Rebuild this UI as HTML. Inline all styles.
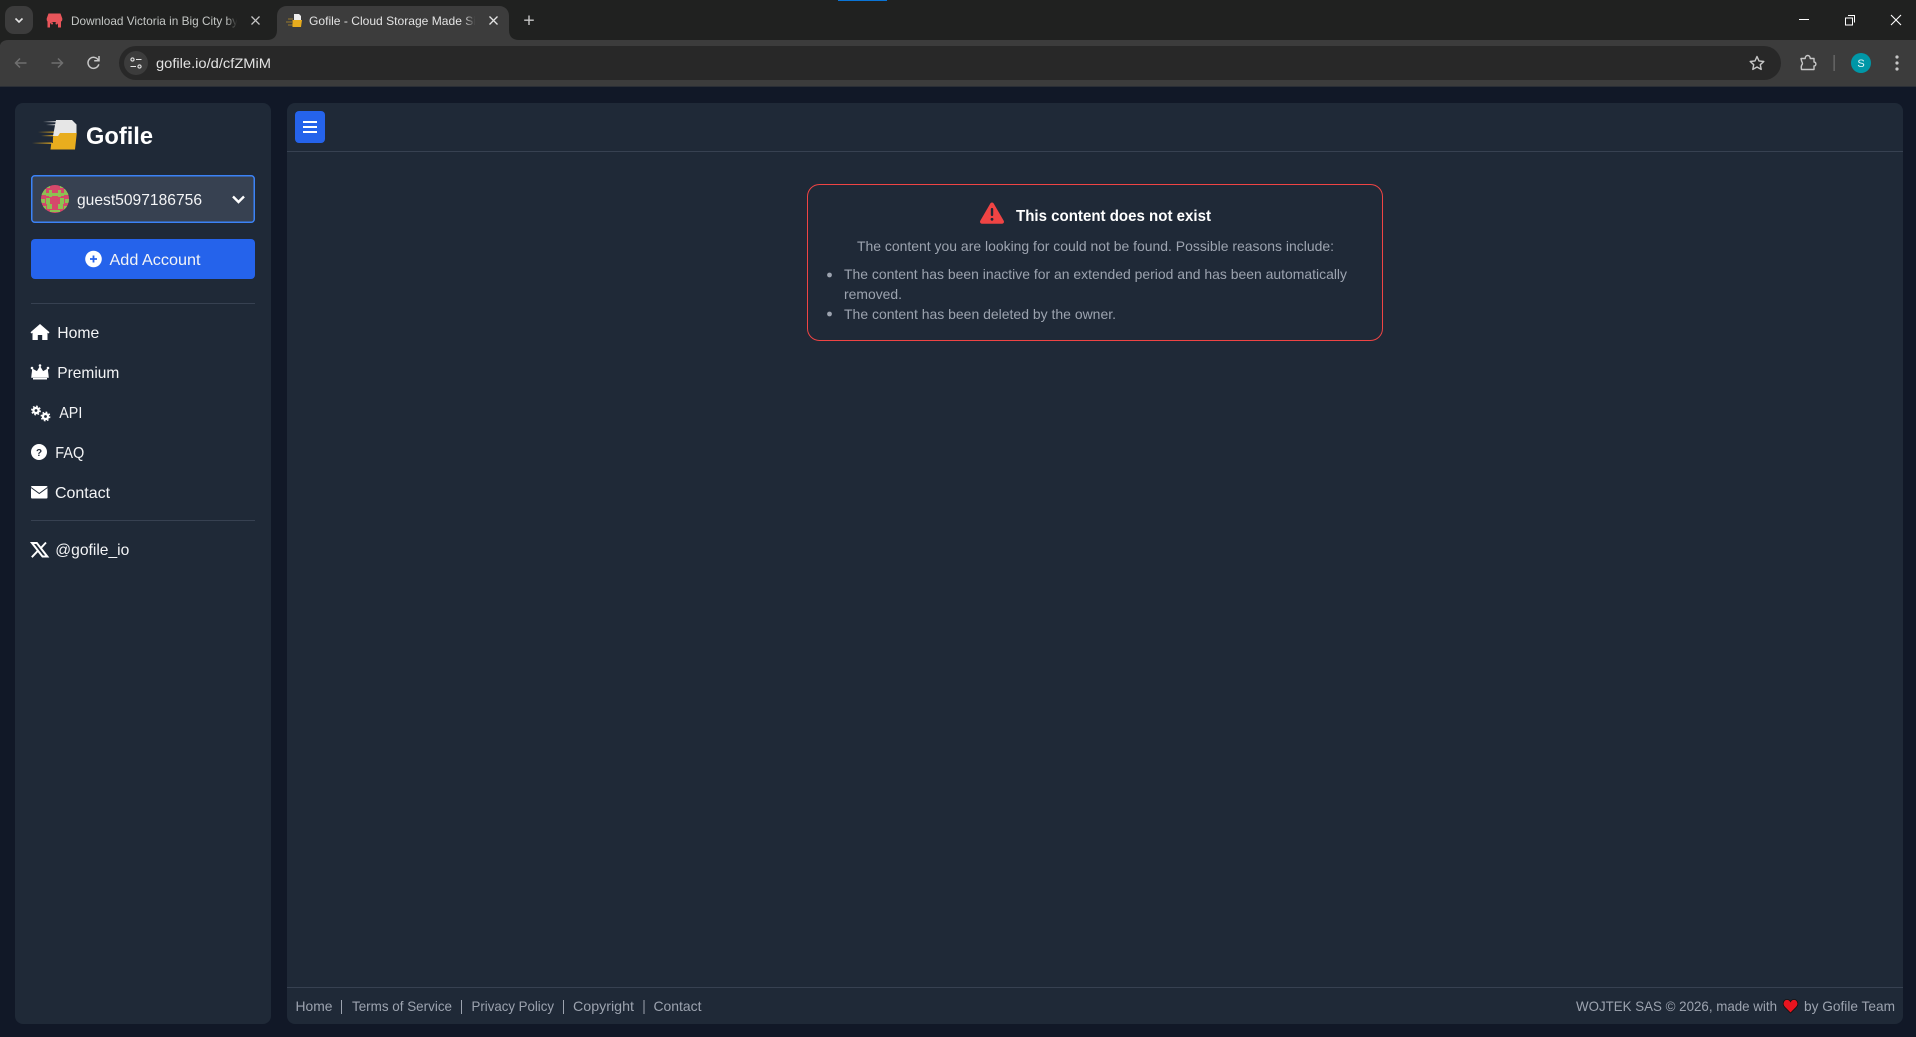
<!DOCTYPE html>
<html lang="en">
<head>
<meta charset="utf-8">
<title>Gofile</title>
<style>
html,body{margin:0;padding:0;width:1916px;height:1037px;overflow:hidden;background:#111827}
svg{position:absolute;left:0;top:0;display:block}
text{font-family:"Liberation Sans",Arial,sans-serif}
.nav{font-size:16px;fill:#f3f4f6}
.foot{font-size:14px;fill:#9ca3af}
.alert{font-size:14px;fill:#9ca3af}
</style>
</head>
<body>
<svg width="1916" height="1037" viewBox="0 0 1916 1037" xmlns="http://www.w3.org/2000/svg">
<defs>
<linearGradient id="f1" x1="0" x2="1"><stop offset="0" stop-color="#202120" stop-opacity="0"/><stop offset=".7" stop-color="#202120"/><stop offset="1" stop-color="#202120"/></linearGradient>
<linearGradient id="f2" x1="0" x2="1"><stop offset="0" stop-color="#3c3c3c" stop-opacity="0"/><stop offset=".8" stop-color="#3c3c3c"/><stop offset="1" stop-color="#3c3c3c"/></linearGradient>
<linearGradient id="s1" x1="0" x2="1"><stop offset="0" stop-color="#e8ad1e" stop-opacity="0"/><stop offset="1" stop-color="#e8ad1e"/></linearGradient>
<linearGradient id="s2" x1="0" x2="1"><stop offset="0" stop-color="#e8e8e8" stop-opacity="0"/><stop offset="1" stop-color="#e8e8e8"/></linearGradient>
</defs>

<!-- browser chrome -->
<rect x="0" y="0" width="1916" height="40" fill="#202120"/>
<rect x="838" y="0" width="49" height="1" fill="#0a74d6"/>
<rect x="5" y="6" width="28" height="28" rx="9" fill="#3c3c3c"/>
<path d="M15.500 18.500l3.500 3.500 3.500-3.500" fill="none" stroke="#e3e3e3" stroke-width="1.600"/>

<path d="M48.500 13.500h12l1.800 5v1.500a2.200 2.200 0 0 1-2.500 1.800H49a2.200 2.200 0 0 1-2.300-1.800v-1.500z" fill="#e8555a"/>
<path d="M47.500 21h13.500v6.500H47.500z" fill="#e8555a"/>
<path d="M50 27.500v-3a4 2.500 0 0 1 8 0v3z" fill="#202120"/>
<circle cx="52" cy="23.500" r="1" fill="#e8555a"/><circle cx="56.500" cy="23.500" r="1" fill="#e8555a"/>
<text x="71" y="25" font-size="12" fill="#c4c7c5" textLength="167" lengthAdjust="spacingAndGlyphs">Download Victoria in Big City by</text>
<rect x="226" y="12" width="16" height="18" fill="url(#f1)"/>
<path d="M251.500 16.500l8 8M259.500 16.500l-8 8" stroke="#c7c7c7" stroke-width="1.300"/>

<path d="M267 40c6 0 10-3 10-10V16c0-6 4-10 10-10h212c6 0 10 4 10 10v14c0 7 4 10 10 10z" fill="#3c3c3c"/>
<path d="M288 19h5M286 22h6M288 25h5" stroke="#e8ad1e" stroke-width="1" opacity=".55"/>
<path d="M294 14h5l2 2v5h-7z" fill="#eeeeee"/>
<path d="M292.500 20h9.500l-1 7h-8.500z" fill="#e8ad1e"/>
<text x="309" y="25" font-size="12" fill="#e3e3e3" textLength="167" lengthAdjust="spacingAndGlyphs">Gofile - Cloud Storage Made Si</text>
<rect x="464" y="12" width="14" height="18" fill="url(#f2)"/>
<path d="M489.500 16.500l8 8M497.500 16.500l-8 8" stroke="#e3e3e3" stroke-width="1.300"/>
<path d="M529 15.500v9.500M524.200 20.200h9.600" stroke="#c7c7c7" stroke-width="1.400"/>

<rect x="1799" y="19" width="10" height="1" fill="#fff"/>
<path d="M1848 15.500h6.500v7" fill="none" stroke="#fff" stroke-width="1"/>
<rect x="1845.500" y="18" width="7" height="7" fill="none" stroke="#fff" stroke-width="1"/>
<path d="M1891 15l10 10M1901 15l-10 10" stroke="#fff" stroke-width="1.100"/>

<rect x="0" y="40" width="1916" height="47" fill="#3c3c3c"/>
<path d="M0 46a8 6 0 0 1 8-6h10H0z" fill="#202120"/>
<rect x="119" y="46" width="1662" height="34" rx="17" fill="#282828"/>
<rect x="0" y="86" width="1916" height="1" fill="#2b2f36"/>

<path d="M26.500 63H15.500M20 58.500l-4.500 4.500 4.500 4.500" fill="none" stroke="#6f6f6f" stroke-width="1.500"/>
<path d="M51.500 63h11M58 58.500l4.500 4.500-4.500 4.500" fill="none" stroke="#6f6f6f" stroke-width="1.500"/>
<path d="M98.500 60.500a5.500 5.500 0 1 0 .3 3.800" fill="none" stroke="#c7c7c7" stroke-width="1.500"/>
<path d="M99 56v4.800h-4.800" fill="none" stroke="#c7c7c7" stroke-width="1.500"/>

<circle cx="136" cy="63" r="12" fill="#3c3c3c"/>
<circle cx="132.500" cy="59.500" r="1.600" fill="none" stroke="#e3e3e3" stroke-width="1.100"/>
<path d="M136 59.500h5.500M130.500 66.500h5.500" stroke="#e3e3e3" stroke-width="1.100"/>
<circle cx="139.500" cy="66.500" r="1.600" fill="none" stroke="#e3e3e3" stroke-width="1.100"/>
<text x="156" y="68" font-size="14" fill="#e3e3e3" textLength="115" lengthAdjust="spacingAndGlyphs">gofile.io/d/cfZMiM</text>

<path d="M1757 56.500l2 4.400 4.800.6-3.500 3.200.9 4.700-4.200-2.400-4.200 2.400.9-4.700-3.500-3.200 4.800-.6z" fill="none" stroke="#c7c7c7" stroke-width="1.400" stroke-linejoin="round"/>
<path d="M1801 58.500h4.200c0-4 5-4 5 0h3.800v3.500c2.500 0 2.500 4 0 4v3.500h-12.500c-.3-1.500-.5-3 .2-4.500 1-.5 1-2.500 0-3.500z" fill="none" stroke="#c7c7c7" stroke-width="1.400" stroke-linejoin="round"/>
<rect x="1833.500" y="55" width="1.300" height="16" fill="#6b6b6b"/>
<circle cx="1861" cy="63" r="10" fill="#0097a7"/>
<text x="1861" y="67" font-size="11" fill="#e6f7f9" text-anchor="middle">S</text>
<circle cx="1897" cy="57" r="1.600" fill="#c7c7c7"/><circle cx="1897" cy="63" r="1.600" fill="#c7c7c7"/><circle cx="1897" cy="69" r="1.600" fill="#c7c7c7"/>

<!-- sidebar -->
<rect x="15" y="103" width="256" height="921" rx="8" fill="#1f2937"/>

<!-- logo -->
<rect x="43" y="121" width="16" height="1.300" fill="url(#s2)"/>
<rect x="46" y="124" width="13" height="1.300" fill="url(#s2)"/>
<rect x="38" y="131.500" width="19" height="1.300" fill="url(#s1)"/>
<rect x="41" y="135" width="14" height="1.300" fill="url(#s1)"/>
<rect x="32" y="142.500" width="20" height="1.300" fill="url(#s1)"/>
<path d="M56 120h16l4.500 4.500V136H53z" fill="#e6e6e6"/>
<path d="M53 136.500l1.500-.5h3.500l2-3h16.800l-1.800 16.500H50.500l.8-6.500h1.500z" fill="#e8ad1e"/>
<text x="86" y="144" font-size="24" font-weight="700" fill="#fff" textLength="67" lengthAdjust="spacingAndGlyphs">Gofile</text>

<!-- account select -->
<rect x="31.750" y="175.750" width="222.500" height="46.500" rx="3" fill="#374151" stroke="#3b82f6" stroke-width="1.500"/>
<g>
<circle cx="55" cy="199" r="14" fill="#d5486b"/>
<clipPath id="av"><circle cx="55" cy="199" r="14"/></clipPath>
<g clip-path="url(#av)" fill="#8cc152">
<rect x="46" y="185" width="4" height="3"/><rect x="60" y="185" width="4" height="3"/>
<rect x="41" y="189" width="5" height="6"/><rect x="64" y="189" width="5" height="6"/>
<rect x="49" y="190" width="3" height="7"/><rect x="58" y="190" width="3" height="7"/>
<rect x="46" y="193" width="18" height="3"/>
<rect x="41" y="199" width="4" height="4"/><rect x="65" y="199" width="4" height="4"/>
<rect x="46" y="198" width="4" height="6"/><rect x="60" y="198" width="4" height="6"/>
<rect x="47" y="204" width="5" height="5"/><rect x="58" y="204" width="5" height="5"/>
<rect x="43" y="206" width="3" height="4"/><rect x="64" y="206" width="3" height="4"/>
<rect x="50" y="210" width="10" height="2"/>
</g></g>
<text x="77" y="205" class="nav" textLength="125" lengthAdjust="spacingAndGlyphs">guest5097186756</text>
<path d="M233 196.500l5.500 5.500 5.500-5.500" fill="none" stroke="#fff" stroke-width="2.400"/>

<!-- add account -->
<rect x="31" y="239" width="224" height="40" rx="4" fill="#2563eb"/>
<circle cx="93.500" cy="259" r="8.300" fill="#fff"/>
<path d="M93.500 255.500v7M90 259h7" stroke="#2563eb" stroke-width="1.800"/>
<text x="109.500" y="265" class="nav" fill="#fff" textLength="91" lengthAdjust="spacingAndGlyphs">Add Account</text>

<rect x="31" y="303" width="224" height="1" fill="#374151"/>

<!-- nav -->
<path d="M40 324l9.500 8.300-1 1.200-1-.8v7.300h-5.300v-5h-4.400v5H32.500v-7.300l-1 .8-1-1.200z" fill="#fff"/>
<text x="57.300" y="338" class="nav" textLength="42" lengthAdjust="spacingAndGlyphs">Home</text>

<path d="M32.500 369l4.500 2.500 3-5 3 5 4.500-2.500 1 8.500h-17z" fill="#fff" stroke="#fff" stroke-width=".6" stroke-linejoin="round"/>
<circle cx="32" cy="368" r="1.300" fill="#fff"/><circle cx="40" cy="365.500" r="1.300" fill="#fff"/><circle cx="48" cy="368" r="1.300" fill="#fff"/>
<rect x="33" y="378" width="14" height="1.500" fill="#fff"/>
<text x="57.300" y="378" class="nav" textLength="62" lengthAdjust="spacingAndGlyphs">Premium</text>

<g fill="none" stroke="#fff">
<circle cx="36" cy="410.500" r="2.600" stroke-width="2.400"/>
<circle cx="36" cy="410.500" r="4.300" stroke-width="1.300" stroke-dasharray="1.700 1.680"/>
<circle cx="45.500" cy="416.500" r="2.600" stroke-width="2.400"/>
<circle cx="45.500" cy="416.500" r="4.300" stroke-width="1.300" stroke-dasharray="1.700 1.680"/>
</g>
<text x="59.300" y="418" class="nav" textLength="23" lengthAdjust="spacingAndGlyphs">API</text>

<circle cx="39" cy="452" r="8" fill="#fff"/>
<text x="39" y="456" font-size="10" font-weight="700" fill="#1f2937" text-anchor="middle">?</text>
<text x="55.300" y="458" class="nav" textLength="29" lengthAdjust="spacingAndGlyphs">FAQ</text>

<rect x="31" y="486" width="16.500" height="12.500" rx="1" fill="#fff"/>
<path d="M31 487.500l8.250 6 8.250-6" fill="none" stroke="#1f2937" stroke-width="1"/>
<text x="55" y="498" class="nav" textLength="55" lengthAdjust="spacingAndGlyphs">Contact</text>

<rect x="31" y="520" width="224" height="1" fill="#374151"/>

<path d="M32 543h4.800l10.500 13.500h-4.800z" fill="none" stroke="#fff" stroke-width="2"/>
<path d="M46 542.500l-5.800 6.300M37.500 551.200l-5.700 6" stroke="#fff" stroke-width="1.900"/>
<text x="55.300" y="555" class="nav" textLength="74" lengthAdjust="spacingAndGlyphs">@gofile_io</text>

<!-- main panel -->
<rect x="287" y="103" width="1616" height="921" rx="8" fill="#1f2937"/>
<rect x="287" y="151" width="1616" height="1" fill="#374151"/>
<rect x="287" y="987" width="1616" height="1" fill="#374151"/>
<rect x="295" y="111" width="30" height="32" rx="4" fill="#2563eb"/>
<rect x="303" y="121" width="14" height="2" fill="#fff"/>
<rect x="303" y="126" width="14" height="2" fill="#fff"/>
<rect x="303" y="131" width="14" height="2" fill="#fff"/>

<!-- alert -->
<rect x="807.500" y="184.500" width="575" height="156" rx="12" fill="none" stroke="#ef4444" stroke-width="1"/>
<path d="M992 202.500c.7 0 1.300.4 1.700 1l10 17.300c.8 1.400-.2 3-1.700 3h-20c-1.500 0-2.500-1.600-1.700-3l10-17.300c.4-.6 1-1 1.700-1z" fill="#ef4444"/>
<rect x="990.800" y="208" width="2.400" height="8" rx="1" fill="#1f2937"/>
<circle cx="992" cy="219.300" r="1.400" fill="#1f2937"/>
<text x="1016" y="221" font-size="16" font-weight="700" fill="#fff" textLength="195" lengthAdjust="spacingAndGlyphs">This content does not exist</text>
<text x="857" y="251" class="alert" textLength="477" lengthAdjust="spacingAndGlyphs">The content you are looking for could not be found. Possible reasons include:</text>
<circle cx="829.500" cy="275" r="2.400" fill="#9ca3af"/>
<text x="844" y="279" class="alert" textLength="503" lengthAdjust="spacingAndGlyphs">The content has been inactive for an extended period and has been automatically</text>
<text x="844" y="299" class="alert" textLength="58" lengthAdjust="spacingAndGlyphs">removed.</text>
<circle cx="829.500" cy="314" r="2.400" fill="#9ca3af"/>
<text x="844" y="319" class="alert" textLength="272" lengthAdjust="spacingAndGlyphs">The content has been deleted by the owner.</text>

<!-- footer -->
<text x="295.500" y="1011" class="foot" textLength="37" lengthAdjust="spacingAndGlyphs">Home</text>
<rect x="341" y="1000" width="1" height="14" fill="#9ca3af"/>
<text x="352" y="1011" class="foot" textLength="100" lengthAdjust="spacingAndGlyphs">Terms of Service</text>
<rect x="461" y="1000" width="1" height="14" fill="#9ca3af"/>
<text x="471.500" y="1011" class="foot" textLength="82.500" lengthAdjust="spacingAndGlyphs">Privacy Policy</text>
<rect x="563" y="1000" width="1" height="14" fill="#9ca3af"/>
<text x="573" y="1011" class="foot" textLength="61" lengthAdjust="spacingAndGlyphs">Copyright</text>
<rect x="643.500" y="1000" width="1" height="14" fill="#9ca3af"/>
<text x="653.500" y="1011" class="foot" textLength="48" lengthAdjust="spacingAndGlyphs">Contact</text>

<text x="1576" y="1011" class="foot" textLength="201" lengthAdjust="spacingAndGlyphs">WOJTEK SAS © 2026, made with</text>
<path d="M1790.500 1013l-5.800-5.800c-3.300-3.700-.5-7.700 2.300-7.700 1.700 0 2.800.9 3.500 2.200.7-1.300 1.800-2.200 3.500-2.200 2.800 0 5.600 4 2.300 7.700z" fill="#e8141f" stroke="#111" stroke-width=".8"/>
<text x="1804" y="1011" class="foot" textLength="91" lengthAdjust="spacingAndGlyphs">by Gofile Team</text>
</svg>
</body>
</html>
